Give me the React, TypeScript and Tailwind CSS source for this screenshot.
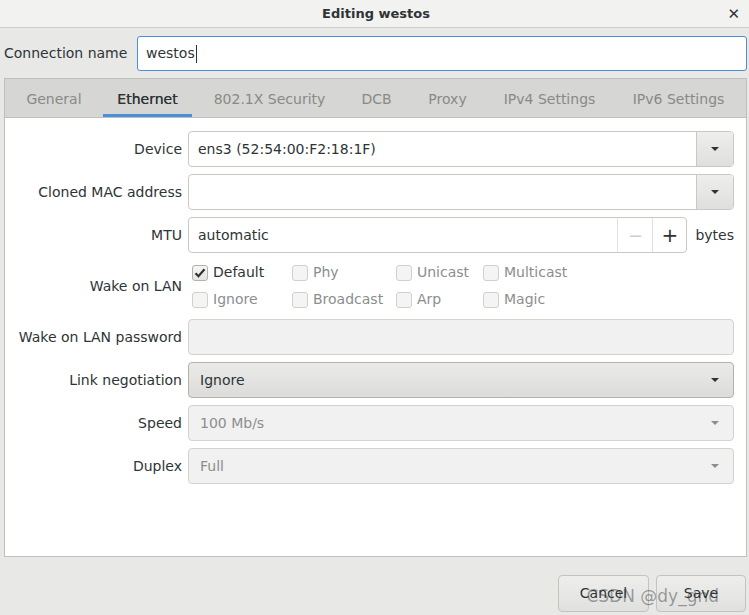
import type { ReactNode } from "react";

const font = { fontFamily: '"DejaVu Sans", "Liberation Sans", sans-serif' };

function Arrow({ muted = false }: { muted?: boolean }) {
  return (
    <svg width="10" height="6" viewBox="0 0 10 6" className="block">
      <path d="M1 1h8L5 5z" fill={muted ? "#8b8e8f" : "#2e3436"} />
    </svg>
  );
}

function Row({ label, children, h = "h-[36px]" }: { label: string; children: ReactNode; h?: string }) {
  return (
    <div className={`flex items-center ${h}`}>
      <div className="w-[183px] shrink-0 pr-[6px] text-right text-[#2e3436]">{label}</div>
      <div className="flex min-w-0 flex-1 items-center pr-[12px]">{children}</div>
    </div>
  );
}

function Combo({ value }: { value: string }) {
  return (
    <div className="flex h-[36px] flex-1 overflow-hidden rounded-[4px] border border-[#cdc7c2] bg-white">
      <div className="flex flex-1 items-center px-[9px] text-[#2e3436]">{value}</div>
      <div className="flex w-[37px] items-center justify-center border-l border-[#cdc7c2] bg-gradient-to-b from-[#eeeeec] to-[#dfdfdd]">
        <Arrow />
      </div>
    </div>
  );
}

function DisabledCombo({ value }: { value: string }) {
  return (
    <div className="flex h-[36px] flex-1 items-center justify-between rounded-[4px] border border-[#d6d1cd] bg-[#f1f1f1] pl-[11px] pr-[13px] text-[#8b8e8f]">
      <span>{value}</span>
      <Arrow muted />
    </div>
  );
}

function Check({ label, checked = false, disabled = true }: { label: string; checked?: boolean; disabled?: boolean }) {
  return (
    <div className="flex items-center gap-[5px]">
      <div
        className={`flex h-[16px] w-[16px] items-center justify-center rounded-[3px] border ${
          disabled ? "border-[#d3cfcb] bg-[#f4f4f4]" : "border-[#b6b0aa] bg-gradient-to-b from-[#f6f6f5] to-[#e4e4e2]"
        }`}
      >
        {checked && (
          <svg width="12" height="12" viewBox="0 0 12 12">
            <path d="M1.5 6.2l3 3 6-7" fill="none" stroke="#2e3436" strokeWidth="2.2" />
          </svg>
        )}
      </div>
      <span className={disabled ? "text-[#8b8e8f]" : "text-[#2e3436]"}>{label}</span>
    </div>
  );
}

// label, width of its text in the reference
const tabs: [string, string][] = [
  ["General", "w-[56px]"],
  ["Ethernet", "w-[63px]"],
  ["802.1X Security", "w-[113px]"],
  ["DCB", "w-[33px]"],
  ["Proxy", "w-[41px]"],
  ["IPv4 Settings", "w-[95px]"],
  ["IPv6 Settings", "w-[95px]"],
];

export default function App() {
  return (
    <div style={font} className="relative flex h-[615px] w-[749px] flex-col overflow-hidden bg-[#e8e8e7] text-[14px]">
      <div className="relative flex h-[28px] shrink-0 items-center justify-center border-b border-[#cfcfcd] bg-[#f2f2f1]">
        <span className="pl-[3px] text-[13px] font-bold text-[#2e3436]">Editing westos</span>
        <span className="absolute right-[9px] top-[3px] text-[15px] font-bold text-[#2e3436]">✕</span>
      </div>

      <div className="flex items-center pl-[4px] pr-[2px] pt-[8px]">
        <span className="w-[133px] shrink-0 text-[#2e3436]">Connection name</span>
        <div className="flex h-[35px] flex-1 items-center rounded-[3px] border border-[#4a90d9] bg-white px-[8px] text-[#2e3436]">
          westos<span className="ml-[1px] inline-block h-[18px] w-[1px] bg-[#2e3436]" />
        </div>
      </div>

      <div className="ml-[4px] mr-[2px] mt-[7px] flex h-[479px] flex-col border border-[#c0bfbc]">
        <div className="flex h-[39px] shrink-0 items-stretch overflow-hidden border-b border-[#c0bfbc] bg-[#d6d6d5] pl-[4px]">
          {tabs.map(([t, w]) => (
            <div
              key={t}
              className={`mx-[4px] flex shrink-0 items-center px-[13px] pt-[2px] ${
                t === "Ethernet" ? "border-b-[3px] border-[#4a90d9] pt-[5px] text-[#2e3436] [text-shadow:0_0_0.4px_#2e3436]" : "text-[#888a85]"
              }`}
            >
              <span className={`${w} whitespace-nowrap text-center`}>{t}</span>
            </div>
          ))}
        </div>

        <div className="flex flex-1 flex-col gap-[7px] bg-white pt-[13px]">
          <Row label="Device">
            <Combo value="ens3 (52:54:00:F2:18:1F)" />
          </Row>
          <Row label="Cloned MAC address">
            <Combo value="" />
          </Row>
          <Row label="MTU">
            <div className="flex h-[36px] flex-1 overflow-hidden rounded-[4px] border border-[#cdc7c2] bg-white">
              <div className="flex flex-1 items-center px-[9px] text-[#2e3436]">automatic</div>
              <div className="flex w-[35px] items-center justify-center border-l border-[#e3e0dd] text-[18px] text-[#cfcfcd]">−</div>
              <div className="flex w-[34px] items-center justify-center border-l border-[#e3e0dd] text-[20px] text-[#2e3436]">+</div>
            </div>
            <span className="ml-[8px] text-[#2e3436]">bytes</span>
          </Row>
          <Row label="Wake on LAN" h="h-[52px]">
            <div className="grid grid-cols-[100px_104px_87px_100px] gap-y-[6px] pl-[4px]">
              <Check label="Default" checked disabled={false} />
              <Check label="Phy" />
              <Check label="Unicast" />
              <Check label="Multicast" />
              <Check label="Ignore" />
              <Check label="Broadcast" />
              <Check label="Arp" />
              <Check label="Magic" />
            </div>
          </Row>
          <Row label="Wake on LAN password">
            <div className="h-[36px] flex-1 rounded-[4px] border border-[#d6d1cd] bg-[#f1f1f1]" />
          </Row>
          <Row label="Link negotiation">
            <div className="flex h-[36px] flex-1 items-center justify-between rounded-[4px] border border-[#b6b0aa] bg-gradient-to-b from-[#eaeae9] to-[#dcdcdb] pl-[11px] pr-[13px] text-[#2e3436]">
              <span>Ignore</span>
              <Arrow />
            </div>
          </Row>
          <Row label="Speed">
            <DisabledCombo value="100 Mb/s" />
          </Row>
          <Row label="Duplex">
            <DisabledCombo value="Full" />
          </Row>
        </div>
      </div>

      <div className="flex flex-1 items-end justify-end gap-[7px] pb-[3px] pr-[3px]">
        <button className="h-[37px] w-[91px] rounded-[4px] border border-[#c6c2bd] bg-gradient-to-b from-[#eeeeec] to-[#e0e0de] text-[#2e3436]">Cancel</button>
        <button className="h-[37px] w-[90px] rounded-[4px] border border-[#c6c2bd] bg-gradient-to-b from-[#eeeeec] to-[#e0e0de] text-[#2e3436]">Save</button>
      </div>

      <span className="pointer-events-none absolute bottom-[6px] right-[30px] text-[17px] text-[#2e3436]/45">CSDN @dy_gnd</span>
    </div>
  );
}
